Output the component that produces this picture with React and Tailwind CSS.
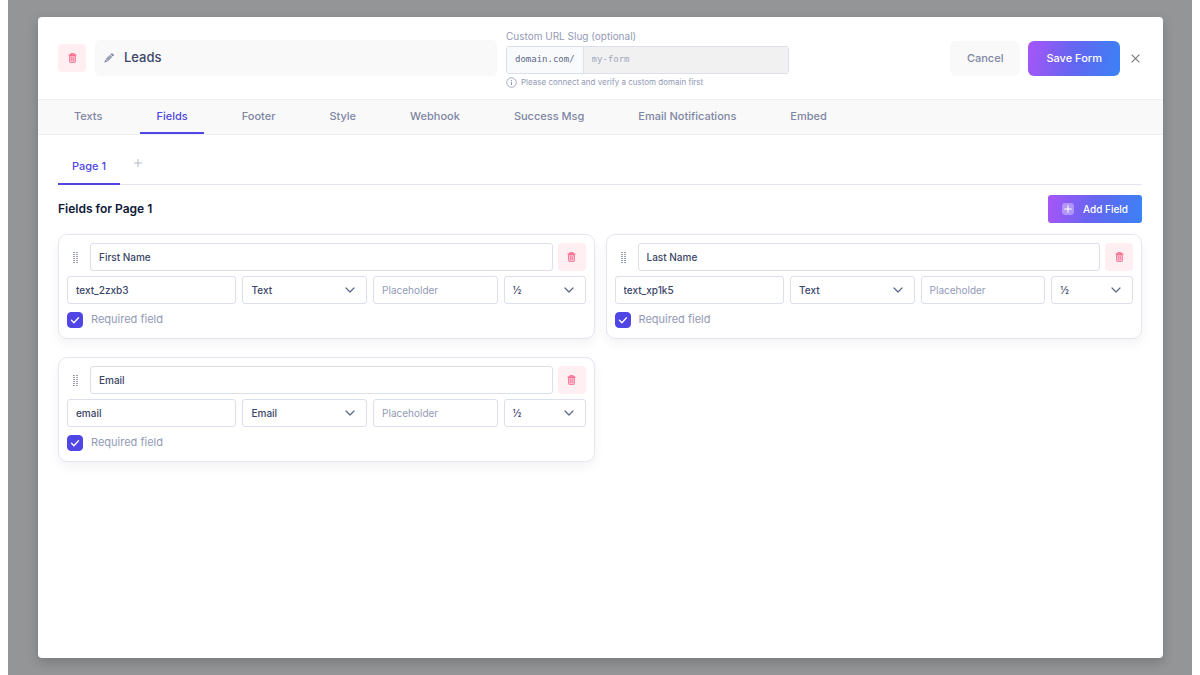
import React, { useState } from "react";

const TABS = ["Texts", "Fields", "Footer", "Style", "Webhook", "Success Msg", "Email Notifications", "Embed"];

const FIELDS = [
  { label: "First Name", name: "text_2zxb3", type: "Text" },
  { label: "Last Name", name: "text_xp1k5", type: "Text" },
  { label: "Email", name: "email", type: "Email" },
];

const control =
  "block h-7 w-full min-w-0 rounded-[3px] border border-[#dbdfee] bg-white px-2 text-[10px] text-[#3b4668] outline-none placeholder:text-[#9299b5]";

function TrashIcon() {
  return (
    <svg viewBox="0 0 10 12" className="h-[10px] w-[9px]" aria-hidden="true">
      <path d="M1.5 3.2h7v7a1.3 1.3 0 0 1-1.3 1.3H2.8a1.3 1.3 0 0 1-1.3-1.3z" fill="#f8285a" fillOpacity="0.25" stroke="#f4688a" strokeWidth="1" />
      <path d="M0.3 2.4h9.4M3 2.2V0.9h4v1.3" fill="none" stroke="#f4557c" strokeWidth="1.2" />
      <path d="M4 5v4.5M6 5v4.5" stroke="#f4688a" strokeWidth="0.8" />
    </svg>
  );
}

function TrashButton({ label }) {
  return (
    <button type="button" aria-label={label} className="flex size-7 shrink-0 items-center justify-center rounded bg-[#ffeef2]">
      <TrashIcon />
    </button>
  );
}

function GripIcon() {
  return (
    <svg viewBox="0 0 6 12" className="h-3 w-[6px]" fill="#9aa0bb" shapeRendering="crispEdges" aria-hidden="true">
      {[1, 3, 5, 7, 9, 11].map((y) => (
        <g key={y}>
          <rect x="1" y={y} width="2" height="1" />
          <rect x="4" y={y} width="2" height="1" />
        </g>
      ))}
    </svg>
  );
}

function Select({ label, value, options }) {
  return (
    <div className="relative min-w-0">
      <select aria-label={label} defaultValue={value} className={`${control} appearance-none font-medium`}>
        {options.map((o) => (
          <option key={o}>{o}</option>
        ))}
      </select>
      <svg viewBox="0 0 10 6" className="pointer-events-none absolute top-[11px] right-3 h-[6px] w-[10px]" aria-hidden="true">
        <path d="M1 1l4 4 4-4" fill="none" stroke="#5b6788" strokeWidth="1.2" strokeLinecap="round" strokeLinejoin="round" />
      </svg>
    </div>
  );
}

function FieldCard({ field }) {
  return (
    <section className="flex flex-col gap-[5px] rounded-[9px] border border-[#e3e6f1] bg-white p-2 shadow-[0_5px_12px_rgba(0,0,0,0.05)]">
      <div className="flex items-center gap-[5px]">
        <span className="flex w-[18px] shrink-0 cursor-grab pl-[5px]">
          <GripIcon />
        </span>
        <input aria-label="Field label" defaultValue={field.label} className={`${control} font-medium`} />
        <TrashButton label={`Delete ${field.label}`} />
      </div>
      <div className="grid grid-cols-[170fr_125fr_125fr_82fr] gap-[6px]">
        <input aria-label="Field name" defaultValue={field.name} className={`${control} font-medium`} />
        <Select label="Field type" value={field.type} options={["Text", "Email"]} />
        <input aria-label="Placeholder" placeholder="Placeholder" className={control} />
        <Select label="Width" value="½" options={["½", "1"]} />
      </div>
      <label className="flex h-[21px] items-center gap-2 text-[11px] text-[#9299b5]">
        <span className="relative flex size-4 items-center justify-center">
          <input type="checkbox" defaultChecked className="peer size-4 appearance-none rounded-[4px] border border-[#dbdfee] checked:border-[#4f46e5] checked:bg-[#4f46e5]" />
          <svg viewBox="0 0 16 16" className="pointer-events-none absolute inset-0 size-4 opacity-0 peer-checked:opacity-100" aria-hidden="true">
            <path d="M4.5 8.3l2.4 2.4 4.6-5" fill="none" stroke="#fff" strokeWidth="1.3" strokeLinecap="round" strokeLinejoin="round" />
          </svg>
        </span>
        Required field
      </label>
    </section>
  );
}

export default function App() {
  const [tab, setTab] = useState("Fields");
  return (
    <div className="h-screen bg-white px-2 font-['Inter',sans-serif]">
      <div className="flex h-full bg-[#949597] py-[17px] pr-[29px] pl-[30px]">
        <main className="flex min-w-0 flex-1 flex-col overflow-hidden rounded-[4px] bg-white shadow-[0_4px_12px_rgba(0,0,0,0.2)]">
          <header className="flex h-[82px] shrink-0 items-center pr-[21px] pl-5">
            <TrashButton label="Delete form" />
            <label className="ml-[9px] flex h-9 min-w-0 flex-[402_1_402px] items-center gap-[10px] rounded-[5px] bg-[#f9f9f9] px-[9px]">
              <svg viewBox="0 0 10 10" className="size-[10px] shrink-0" aria-hidden="true">
                <path d="M0.4 9.6l0.9-3.1 2.2 2.2z" fill="#7e86a3" />
                <path d="M1.6 6.1L6 1.7l2.3 2.3-4.4 4.4z" fill="#9aa0b8" />
                <path d="M6.5 1.2l0.8-0.8a0.8 0.8 0 0 1 1.1 0l1.2 1.2a0.8 0.8 0 0 1 0 1.1l-0.8 0.8z" fill="#7e86a3" />
              </svg>
              <input aria-label="Form name" defaultValue="Leads" className="w-full min-w-0 bg-transparent text-[13px] font-medium text-[#3b4668] outline-none" />
            </label>
            <div className="ml-[9px] flex min-w-0 flex-[283_1_283px] flex-col">
              <label htmlFor="slug" className="text-[10px] leading-4 text-[#9299b5]">
                Custom URL Slug (optional)
              </label>
              <div className="mt-[2px] flex h-7 overflow-hidden rounded-[3px] border border-[#dbdfee] font-['DejaVu_Sans_Mono',monospace] text-[9px]">
                <span className="flex shrink-0 items-center border-r border-[#dbdfee] bg-[#f9fafc] px-2 text-[#5b6788]">domain.com/</span>
                <input id="slug" placeholder="my-form" disabled className="min-w-0 flex-1 bg-[#f1f1f2] px-2 placeholder:text-[#a0a6bb]" />
              </div>
              <p className="mt-[2px] flex items-center gap-1 text-[8px] leading-3 text-[#9299b5]">
                <svg viewBox="0 0 12 12" className="size-[11px]" aria-hidden="true">
                  <circle cx="6" cy="6" r="5.2" fill="none" stroke="#9299b5" strokeWidth="0.9" />
                  <path d="M6 5.2v3.4M6 3.2v1.1" stroke="#9299b5" strokeWidth="1.1" />
                </svg>
                Please connect and verify a custom domain first
              </p>
            </div>
            <div className="flex flex-[353_1_353px] items-center justify-end gap-2">
              <button type="button" className="h-[35px] rounded-md bg-[#f9f9f9] px-[17px] text-[11px] font-medium text-[#7e86a3]">
                Cancel
              </button>
              <button type="button" className="h-[35px] rounded-md bg-[linear-gradient(100deg,#a855f7,#6366f1_50%,#3b82f6)] px-[18px] text-[11px] font-medium text-white">
                Save Form
              </button>
              <button type="button" aria-label="Close" className="flex size-[14px] items-center justify-center">
                <svg viewBox="0 0 10 10" className="size-[9px]" aria-hidden="true">
                  <path d="M0.7 0.7l8.6 8.6M9.3 0.7L0.7 9.3" stroke="#777" strokeWidth="1.2" />
                </svg>
              </button>
            </div>
          </header>

          <nav className="flex h-9 shrink-0 gap-[22px] border-y border-[#eeeef3] bg-[#f9f9f9] px-5">
            {TABS.map((t) => (
              <button
                key={t}
                type="button"
                onClick={() => setTab(t)}
                className={
                  t === tab
                    ? "border-b-2 border-[#4f46e5] px-4 text-[11px] font-medium text-[#4f46e5]"
                    : "border-b-2 border-transparent px-4 text-[11px] font-medium text-[#7e86a3]"
                }
              >
                {t}
              </button>
            ))}
          </nav>

          <div className="flex min-h-0 flex-1 flex-col pt-3 pr-[21px] pl-5">
            <div className="flex shrink-0 border-b border-[#e3e6f1]">
              <button type="button" className="-mb-px h-[38px] border-b-2 border-[#4f46e5] px-[14px] pt-[2px] text-[11px] font-medium text-[#4f46e5]">
                Page 1
              </button>
              <button type="button" aria-label="Add page" className="ml-3 flex h-8 w-3 items-center justify-center">
                <svg viewBox="0 0 8 8" className="size-2" aria-hidden="true">
                  <path d="M4 0v8M0 4h8" stroke="#b5b9c9" strokeWidth="1" />
                </svg>
              </button>
            </div>

            <div className="mt-[10px] flex items-center justify-between">
              <h2 className="text-xs font-semibold text-[#0f1738]">Fields for Page 1</h2>
              <button
                type="button"
                className="flex h-7 items-center gap-[9px] rounded-[3px] bg-[linear-gradient(100deg,#a855f7,#6366f1_50%,#3b82f6)] px-[14px] text-[10px] font-medium text-white"
              >
                <svg viewBox="0 0 12 12" className="size-3" aria-hidden="true">
                  <rect width="12" height="12" rx="3" fill="#fff" fillOpacity="0.35" />
                  <path d="M6 2.7v6.6M2.7 6h6.6" stroke="#fff" strokeWidth="1.1" strokeLinecap="round" />
                </svg>
                Add Field
              </button>
            </div>

            <div className="mt-[11px] grid grid-cols-2 gap-x-[11px] gap-y-[18px]">
              {FIELDS.map((f) => (
                <FieldCard key={f.name} field={f} />
              ))}
            </div>
          </div>
        </main>
      </div>
    </div>
  );
}
